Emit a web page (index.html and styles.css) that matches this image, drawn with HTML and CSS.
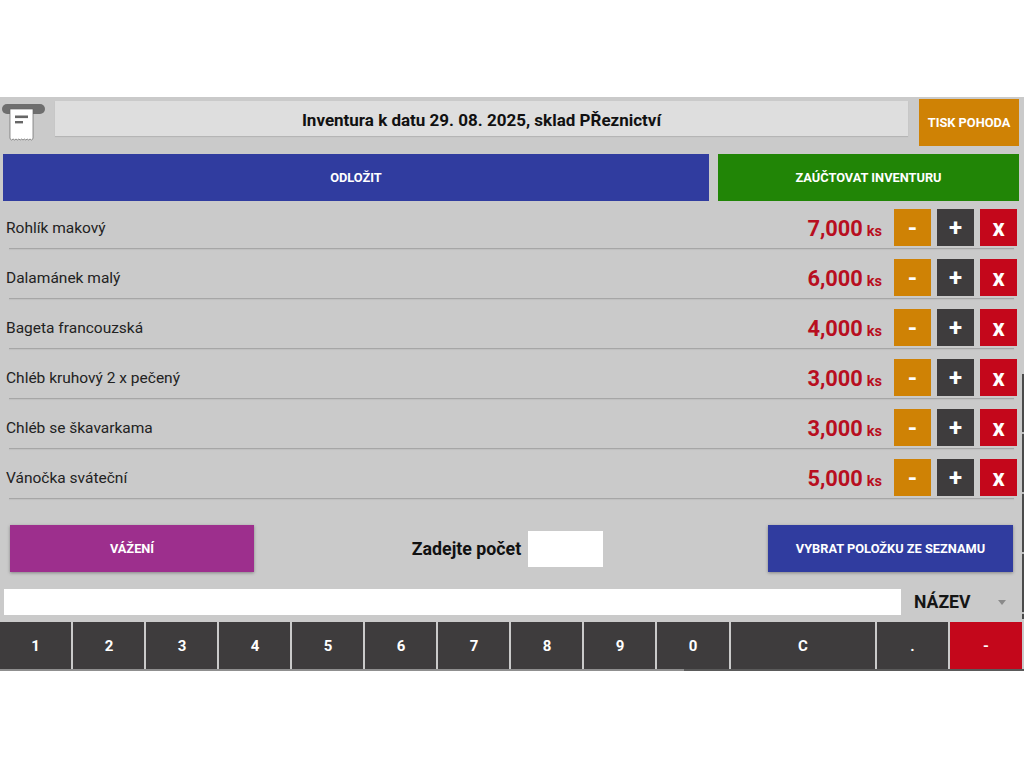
FILE: index.html
```html
<!DOCTYPE html>
<html lang="cs">
<head>
<meta charset="utf-8">
<title>Inventura</title>
<link rel="stylesheet" href="styles.css">
</head>
<body>
<main class="app">
  <header class="top">
    <svg class="logo" width="44" height="38" viewBox="0 0 44 38">
      <rect x="0" y="1" width="43" height="10" rx="5" fill="#6e6e6e"/>
      <path d="M8 6H31V35Q31 36.5 29.5 37Q28 35 26.6 37Q25.2 35 23.8 37Q22.4 35 21 37Q19.6 35 18.2 37Q16.8 35 15.4 37Q14 35 12.6 37Q11.2 35 9.5 37Q8 36.5 8 35Z" fill="#fff" stroke="#666" stroke-width=".7"/>
      <rect x="13" y="12.5" width="13" height="2.6" fill="#666"/>
      <rect x="13" y="18" width="8" height="2.4" fill="#666"/>
    </svg>
    <h1 class="title">Inventura k datu 29. 08. 2025, sklad PŘeznictví</h1>
    <button class="btn orange tisk">TISK POHODA</button>
  </header>
  <div class="actions">
    <button class="btn blue odlozit">ODLOŽIT</button>
    <button class="btn green zauctovat">ZAÚČTOVAT INVENTURU</button>
  </div>
  <ul class="rows">
    <li class="row"><span class="name">Rohlík makový</span><span class="qty">7,000<small>ks</small></span><button class="sq orange">-</button><button class="sq dark">+</button><button class="sq red">x</button></li>
    <li class="row"><span class="name">Dalamánek malý</span><span class="qty">6,000<small>ks</small></span><button class="sq orange">-</button><button class="sq dark">+</button><button class="sq red">x</button></li>
    <li class="row"><span class="name">Bageta francouzská</span><span class="qty">4,000<small>ks</small></span><button class="sq orange">-</button><button class="sq dark">+</button><button class="sq red">x</button></li>
    <li class="row"><span class="name">Chléb kruhový 2 x pečený</span><span class="qty">3,000<small>ks</small></span><button class="sq orange">-</button><button class="sq dark">+</button><button class="sq red">x</button></li>
    <li class="row"><span class="name">Chléb se škavarkama</span><span class="qty">3,000<small>ks</small></span><button class="sq orange">-</button><button class="sq dark">+</button><button class="sq red">x</button></li>
    <li class="row"><span class="name">Vánočka sváteční</span><span class="qty">5,000<small>ks</small></span><button class="sq orange">-</button><button class="sq dark">+</button><button class="sq red">x</button></li>
  </ul>
  <div class="entry">
    <button class="btn violet raised vazeni">VÁŽENÍ</button>
    <div class="count"><label class="count-label" for="pocet">Zadejte počet</label><input class="count-input" id="pocet"></div>
    <button class="btn blue raised vybrat">VYBRAT POLOŽKU ZE SEZNAMU</button>
  </div>
  <div class="search">
    <input class="search-input" aria-label="Hledat">
    <div class="select"><span>NÁZEV</span><i class="caret"></i></div>
  </div>
  <div class="keys">
    <button class="key">1</button><button class="key">2</button><button class="key">3</button><button class="key">4</button><button class="key">5</button><button class="key">6</button><button class="key">7</button><button class="key">8</button><button class="key">9</button><button class="key">0</button><button class="key wide">C</button><button class="key">.</button><button class="key minus">-</button>
  </div>
  <div class="edge"></div>
</main>
</body>
</html>
```
FILE: styles.css
```css
* { box-sizing: border-box; }
html, body { margin: 0; background: #fff; }
body { padding-top: 97px; font-family: Roboto, "Liberation Sans", sans-serif; }
button { border: 0; padding: 0; margin: 0; font-family: inherit; color: #fff; font-weight: 700; }
ul { list-style: none; margin: 0; padding: 0; }

.app { position: relative; width: 1024px; height: 574px; background: #cacaca; border-bottom: 2px solid #8f8f8f; display: flex; flex-direction: column; }
.app > * { flex: none; }
.app::after { content: ""; position: absolute; left: 684px; right: 0; bottom: -2px; height: 2px; background: #5a5a5a; }

.top { height: 57px; display: flex; align-items: flex-start; padding-left: 2px; }
.logo { margin-top: 6px; flex: none; }
.title { width: 853px; height: 35px; margin: 4px 0 0 9px; background: #dedede; box-shadow: 0 1px 1px #b5b5b5; font-size: 17px; font-weight: 700; color: #111; line-height: 38px; text-align: center; }
.tisk { width: 100px; height: 47px; margin: 2px 0 0 11px; }

.btn { display: block; font-size: 12.8px; }
.orange { background: #cf8205; }
.blue { background: #303c9f; }
.green { background: #218506; }
.violet { background: #9d2f8d; }
.dark { background: #3e3c3d; }
.red { background: #c4071b; }
.raised { box-shadow: 0 1px 3px rgba(0,0,0,.35); }

.actions { height: 47px; display: flex; gap: 9px; padding-left: 3px; }
.odlozit { width: 706px; }
.zauctovat { width: 301px; }

.rows { margin-top: 8px; }
.row { position: relative; height: 50px; display: flex; align-items: flex-start; padding: 0 7px 0 6px; }
.row::after { content: ""; position: absolute; left: 9px; right: 10px; top: 39px; height: 1px; background: #a6a6a6; box-shadow: 0 1px 1px #bdbdbd; }
.name { flex: 1; font-size: 15.5px; line-height: 39px; color: #222; }
.qty { font-size: 21.8px; line-height: 39px; font-weight: 700; color: #b80e20; margin-right: 12px; }
.qty small { font-size: 14.5px; margin-left: 4px; }
.sq { width: 37px; height: 37px; margin-left: 6px; padding-top: 2px; font-size: 24px; line-height: 35px; }
.sq:first-of-type { margin-left: 0; }

.entry { height: 47px; margin-top: 16px; display: flex; align-items: center; padding: 0 11px 0 10px; }
.vazeni, .vybrat { width: 245px; height: 47px; }
.vazeni { width: 244px; }
.count { flex: 1; display: flex; align-items: center; justify-content: center; gap: 7px; padding-right: 7px; }
.count-label { font-size: 17.8px; font-weight: 700; color: #111; }
.count-input { width: 75px; height: 36px; border: 0; background: #fff; }

.search { height: 26px; margin-top: 17px; display: flex; padding-left: 4px; }
.search-input { width: 897px; border: 0; background: #fff; }
.select { flex: 1; display: flex; align-items: center; padding-left: 13px; position: relative; font-size: 17.6px; font-weight: 700; color: #151515; }
.caret { position: absolute; left: 97px; top: 11px; border: 4px solid transparent; border-top: 5px solid #8a8a8a; border-bottom: 0; }

.keys { height: 47px; margin-top: 7px; display: flex; gap: 2px; padding-right: 2px; }
.key { flex: 0 0 71px; background: #3e3c3d; font-size: 15px; }
.key:nth-child(n+2):nth-child(-n+9) { padding-left: 1px; }
.key.wide { flex-basis: 144px; }
.key:nth-child(10) { flex-basis: 72px; }
.key.minus { flex-basis: 72px; background: #c4071b; }

.edge { position: absolute; right: 0; top: 277px; width: 2px; height: 245px; background: repeating-linear-gradient(#4a4a4a 0, #4a4a4a 58px, #bdbdbd 58px, #bdbdbd 60px); }
```
